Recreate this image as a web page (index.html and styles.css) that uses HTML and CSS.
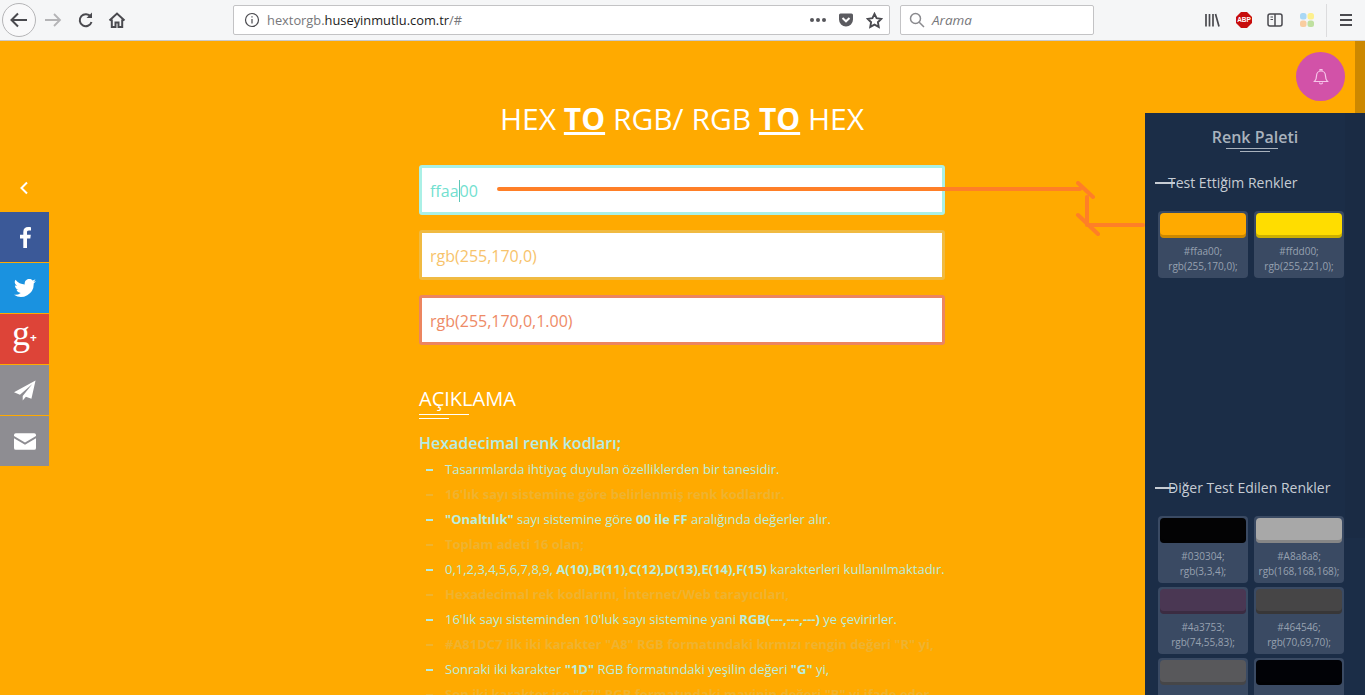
FILE: index.html
```html
<!DOCTYPE html>
<html lang="tr">
<head>
    <meta charset="UTF-8">
    <title>HEX to RGB</title>
    <link rel="stylesheet" href="styles.css">
</head>
<body>
    <header class="browser-bar">
        <div class="nav-btns">
            <span class="back-btn">
                <svg width="22" height="22" viewBox="0 0 22 22" fill="none" stroke="#4a4a4f" stroke-width="2"><path d="M19 11H4M10 4.500L3.500 11L10 17.500"/></svg>
            </span>
            <svg class="nav-icon" width="18" height="18" viewBox="0 0 18 18" fill="none" stroke="#b4b4b6" stroke-width="1.800"><path d="M1 9h15M10 3l6 6-6 6"/></svg>
            <svg class="nav-icon reload" width="18" height="18" viewBox="0 0 18 18" fill="none" stroke="#4a4a4f" stroke-width="2"><path d="M14.500 11a6 6 0 1 1-.8-5.200"/><path d="M15 1.500V7H9.500" fill="#4a4a4f" stroke="none"/></svg>
            <svg class="nav-icon" width="18" height="18" viewBox="0 0 18 18" fill="none" stroke="#4a4a4f" stroke-width="2"><path d="M1.500 9.500L9 2.500l7.500 7M3.800 8.500V16h3.700v-4.500h3V16h3.700V8.500"/></svg>
        </div>
        <div class="url-box">
            <svg width="16" height="16" viewBox="0 0 16 16" fill="none" stroke="#4a4a4f" stroke-width="1.200"><circle cx="8" cy="8" r="6.500"/><path d="M8 7v4.500M8 4.200v1.400"/></svg>
            <span class="url-text">hextorgb.<b>huseyinmutlu.com.tr</b>/#</span>
            <svg width="16" height="4" viewBox="0 0 16 4" fill="#55555a"><circle cx="2" cy="2" r="2"/><circle cx="8" cy="2" r="2"/><circle cx="14" cy="2" r="2"/></svg>
            <svg width="16" height="16" viewBox="0 0 16 16"><path d="M2.500 1.500h11A1.500 1.500 0 0 1 15 3v4.500a7 7 0 0 1-14 0V3a1.500 1.500 0 0 1 1.500-1.500z" fill="#5b5b60"/><path d="M4.500 6L8 9.300 11.500 6" fill="none" stroke="#fff" stroke-width="2"/></svg>
            <svg width="17" height="17" viewBox="0 0 18 18" fill="none" stroke="#4a4a4f" stroke-width="2"><path d="M9 2l2.200 4.600 5 .7-3.600 3.500.9 5L9 13.400l-4.500 2.400.9-5L1.800 7.300l5-.7z"/></svg>
        </div>
        <div class="search-box">
            <svg width="16" height="16" viewBox="0 0 16 16" fill="none" stroke="#8a8a8e" stroke-width="1.500"><circle cx="6.500" cy="6.500" r="5"/><path d="M10.200 10.200L15 15"/></svg>
            <span>Arama</span>
        </div>
        <div class="tool-icons">
            <svg width="16" height="16" viewBox="0 0 16 16" fill="none" stroke="#4a4a4f" stroke-width="1.700"><path d="M2 2v12.500M5.500 2v12.500M9 2v12.500M11.500 2l3.500 12.500"/></svg>
            <svg width="16" height="16" viewBox="0 0 16 16"><path d="M5 0h6l5 5v6l-5 5H5l-5-5V5z" fill="#c70d0d"/><text x="8" y="10.300" class="abp-text">ABP</text></svg>
            <svg width="16" height="16" viewBox="0 0 16 16" fill="none" stroke="#4a4a4f" stroke-width="1.500"><rect x="1" y="2" width="14" height="12" rx="2"/><path d="M8 2v12"/><path d="M3.500 5H6M3.500 7.500H6" stroke-width="1.200"/></svg>
            <svg width="16" height="16" viewBox="0 0 16 16"><rect x="1" y="1" width="6.500" height="6.500" rx="2.500" fill="#a9d8f5"/><rect x="8.500" y="1" width="6.500" height="6.500" rx="2.500" fill="#fdf08e"/><rect x="1" y="8.500" width="6.500" height="6.500" rx="2.500" fill="#f9cda0"/><rect x="8.500" y="8.500" width="6.500" height="6.500" rx="2.500" fill="#bfe0a0"/></svg>
            <span class="tool-sep"></span>
            <svg width="16" height="16" viewBox="0 0 16 16" fill="none" stroke="#4a4a4f" stroke-width="1.800"><path d="M2 3h12M2 8h12M2 13h12"/></svg>
        </div>
    </header>

    <div class="page">
        <main class="content">
            <h1 class="title">HEX <strong>TO</strong> RGB/ RGB <strong>TO</strong> HEX</h1>

            <div class="inputs">
                <div class="color-input hex-input">ffaa<span class="caret"></span>00</div>
                <div class="color-input rgb-input">rgb(255,170,0)</div>
                <div class="color-input rgba-input">rgb(255,170,0,1.00)</div>
            </div>

            <h2 class="desc-title">AÇIKLAMA</h2>
            <h3 class="desc-sub">Hexadecimal renk kodları;</h3>
            <ul class="desc-list">
                <li>Tasarımlarda ihtiyaç duyulan özelliklerden bir tanesidir.</li>
                <li class="faded">16'lık sayı sistemine göre belirlenmiş renk kodlardır.</li>
                <li><b>"Onaltılık"</b> sayı sistemine göre <b>00 ile FF</b> aralığında değerler alır.</li>
                <li class="faded">Toplam adeti 16 olan;</li>
                <li>0,1,2,3,4,5,6,7,8,9, <b>A(10),B(11),C(12),D(13),E(14),F(15)</b> karakterleri kullanılmaktadır.</li>
                <li class="faded">Hexadecimal rek kodlarını, İnternet/Web tarayıcıları,</li>
                <li>16'lık sayı sisteminden 10'luk sayı sistemine yani <b>RGB(---,---,---)</b> ye çevirirler.</li>
                <li class="faded">#A81DC7 ilk iki karakter "A8" RGB formatındaki kırmızı rengin değeri "R" yi,</li>
                <li>Sonraki iki karakter <b>"1D"</b> RGB formatındaki yeşilin değeri <b>"G"</b> yi,</li>
                <li class="faded">Son iki karakter ise "C7" RGB formatındaki mavinin değeri "B" yi ifade eder.</li>
            </ul>
        </main>

        <span class="side-toggle">
            <svg width="10" height="14" viewBox="0 0 10 14" fill="none" stroke="#fff" stroke-width="2"><path d="M8 1.500L2.500 7 8 12.500"/></svg>
        </span>
        <nav class="social">
            <a class="fb"><svg width="14" height="22" viewBox="0 0 14 22" fill="#fff"><path d="M9 22V12.500h3.300l.5-3.800H9V6.400c0-1.100.3-1.800 1.900-1.800H13V1.200C12.600 1.100 11.400 1 10.100 1 7.300 1 5.300 2.700 5.300 5.900v2.800H2v3.800h3.300V22z"/></svg></a>
            <a class="tw"><svg width="22" height="18" viewBox="0 0 22 18" fill="#fff"><path d="M22 2.100c-.8.400-1.700.6-2.600.7.900-.6 1.600-1.400 2-2.500-.9.500-1.800.9-2.900 1.100A4.500 4.500 0 0 0 10.800 5.500 12.800 12.800 0 0 1 1.500.8a4.500 4.500 0 0 0 1.400 6c-.7 0-1.400-.2-2-.6 0 2.200 1.500 4 3.600 4.500-.7.200-1.400.2-2 .1.600 1.800 2.200 3.100 4.200 3.100A9 9 0 0 1 0 15.800 12.800 12.800 0 0 0 19.700 4.500c.9-.6 1.700-1.400 2.300-2.400z"/></svg></a>
            <a class="gp"><span class="gp-g">g</span><span class="gp-plus">+</span></a>
            <a class="tg"><svg width="22" height="21" viewBox="0 0 24 22" fill="#fff"><path d="M23.500 0L0 13l6.500 2.500L20 4 9.500 17v5l3.500-4.300 6 2.300z"/></svg></a>
            <a class="ml"><svg width="22" height="17" viewBox="0 0 24 18" fill="#fff"><path d="M2 0h20a2 2 0 0 1 2 2v1L12 10 0 3V2a2 2 0 0 1 2-2z"/><path d="M0 5.500l12 7 12-7V16a2 2 0 0 1-2 2H2a2 2 0 0 1-2-2z"/></svg></a>
        </nav>

        <svg class="arrows" width="660" height="60" viewBox="0 0 660 60" fill="none" stroke="#ff7f27" stroke-width="4" stroke-linecap="round">
            <path d="M4 8H585M583 2L598 16M592 16V44M592 44H648M583 34L603 53"/>
        </svg>

        <button class="bell">
            <svg width="16" height="17" viewBox="0 0 16 17" fill="none" stroke="#f6c6ea" stroke-width="1.200"><path d="M1.500 13.500c1.500-1.500 2-2.500 2-5.500 0-3 2-5 4.500-5s4.500 2 4.500 5c0 3 .5 4 2 5.500z"/><path d="M7 3V1.500h2V3M6.500 14.500a1.500 1.500 0 0 0 3 0"/></svg>
        </button>

        <span class="edge-strip"></span>

        <aside class="palette">
            <span class="palette-scroll"></span>
            <h2 class="palette-title">Renk Paleti</h2>
            <section class="palette-group mine">
                <h4 class="group-title">Test Ettiğim Renkler</h4>
                <div class="swatches">
                    <div class="swatch">
                        <div class="chip chip-ffaa00"></div>
                        <p>#ffaa00;<br>rgb(255,170,0);</p>
                    </div>
                    <div class="swatch">
                        <div class="chip chip-ffdd00"></div>
                        <p>#ffdd00;<br>rgb(255,221,0);</p>
                    </div>
                </div>
            </section>
            <section class="palette-group">
                <h4 class="group-title">Diğer Test Edilen Renkler</h4>
                <div class="swatches">
                    <div class="swatch">
                        <div class="chip chip-030304"></div>
                        <p>#030304;<br>rgb(3,3,4);</p>
                    </div>
                    <div class="swatch">
                        <div class="chip chip-a8a8a8"></div>
                        <p>#A8a8a8;<br>rgb(168,168,168);</p>
                    </div>
                    <div class="swatch">
                        <div class="chip chip-4a3753"></div>
                        <p>#4a3753;<br>rgb(74,55,83);</p>
                    </div>
                    <div class="swatch">
                        <div class="chip chip-464546"></div>
                        <p>#464546;<br>rgb(70,69,70);</p>
                    </div>
                    <div class="swatch">
                        <div class="chip chip-58585b"></div>
                    </div>
                    <div class="swatch">
                        <div class="chip chip-010206"></div>
                    </div>
                </div>
            </section>
        </aside>
    </div>
</body>
</html>
```

FILE: styles.css
```css
html, body {
    margin: 0;
    height: 695px;
    overflow: hidden;
}

body {
    font-family: 'Open Sans', sans-serif;
    background: #ffaa00;
    color: #fff;
}

/* browser chrome */
.browser-bar {
    height: 40px;
    display: flex;
    align-items: center;
    background: #f5f6f7;
    border-bottom: 1px solid #c9c9cb;
    font-family: 'Open Sans', sans-serif;
}

.nav-btns {
    display: flex;
    align-items: center;
    width: 233px;
    padding-left: 2px;
    box-sizing: border-box;
}

.back-btn {
    width: 32px;
    height: 32px;
    border: 1px solid #b5b5b7;
    border-radius: 50%;
    background: #f9f9fa;
    display: flex;
    align-items: center;
    justify-content: center;
}

.nav-icon {
    margin-left: 8px;
}

.nav-icon.reload {
    margin-left: 15px;
}

.nav-icon:last-child {
    margin-left: 13px;
}

.url-box, .search-box {
    display: flex;
    align-items: center;
    background: #fff;
    border: 1px solid #c3c3c5;
    border-radius: 2px;
    box-sizing: border-box;
    height: 30px;
}

.url-box {
    width: 657px;
    padding: 0 6px 0 10px;
    gap: 12px;
}

.url-text {
    flex: 1;
    margin-left: -5px;
    font-size: 12.85px;
    color: #77777b;
}

.url-text b {
    font-weight: 400;
    color: #1c1c22;
}

.search-box {
    width: 194px;
    margin-left: 10px;
    padding-left: 8px;
    gap: 7px;
    font-size: 13.5px;
    font-style: italic;
    color: #77777b;
}

.tool-icons {
    display: flex;
    align-items: center;
    gap: 15.5px;
    margin-left: 110px;
}

.abp-text {
    font-family: 'Liberation Sans', sans-serif;
    font-size: 6.5px;
    font-weight: 700;
    fill: #fff;
    text-anchor: middle;
}

.tool-sep {
    width: 1px;
    height: 33px;
    background: #dcdcde;
    margin: 0 -4.5px 0 -4px;
}

/* page */
.page {
    position: relative;
    height: 654px;
    overflow: hidden;
}

.content {
    width: 526px;
    margin-left: 419px;
    padding-top: 58px;
}

.title {
    margin: 0 0 26px 0;
    font-size: 30px;
    line-height: 40px;
    font-weight: 400;
    text-align: center;
}

.title strong {
    font-weight: 700;
    text-decoration: underline;
}

.inputs {
    display: flex;
    flex-direction: column;
    gap: 15px;
}

.color-input {
    height: 50px;
    box-sizing: border-box;
    padding-left: 8px;
    line-height: 46px;
    font-size: 16px;
    background: #fff;
    border: 3px solid;
    border-radius: 3px;
}

.hex-input {
    border-color: #aaf0e6;
    color: #72dfd0;
}

.rgb-input {
    border-color: #f0ba41;
    color: #f7c36b;
}

.rgba-input {
    border-color: #ec8560;
    color: #ee8a66;
}

.caret {
    display: inline-block;
    width: 1px;
    height: 22px;
    background: #5fc7b8;
    vertical-align: -5px;
}

.desc-title {
    position: relative;
    margin: 39px 0 0 0;
    font-size: 20px;
    line-height: 30px;
    font-weight: 400;
}

.desc-title::before, .desc-title::after {
    content: '';
    position: absolute;
    left: 0;
    height: 1px;
    background: #fff;
}

.desc-title::before {
    bottom: -1px;
    width: 50px;
}

.desc-title::after {
    bottom: -5px;
    width: 30px;
}

.desc-sub {
    margin: 17px 0 0 0;
    font-size: 16px;
    line-height: 24px;
    font-weight: 600;
    color: #b4ece4;
}

.desc-list {
    list-style: none;
    margin: 2px 0 0 0;
    padding: 0;
    font-size: 13px;
    color: #b9eedd;
}

.desc-list li {
    position: relative;
    padding-left: 26px;
    line-height: 25px;
    white-space: nowrap;
}

.desc-list li::before {
    content: '';
    position: absolute;
    left: 7px;
    top: 12px;
    width: 7px;
    height: 2px;
    background: #b4ece4;
}

.desc-list b {
    font-weight: 700;
}

.desc-list .faded {
    font-weight: 700;
    color: #efb32f;
}

.desc-list .faded::before {
    background: #efb32f;
}

/* left share bar */
.side-toggle {
    position: absolute;
    left: 19px;
    top: 140px;
    line-height: 0;
}

.social {
    position: absolute;
    left: 0;
    top: 171px;
    width: 49px;
    display: flex;
    flex-direction: column;
    gap: 1px;
}

.social a {
    height: 50px;
    display: flex;
    align-items: center;
    justify-content: center;
}

.fb { background: #3b5998; }
.tw { background: #1a92e0; }
.gp { background: #dd4438; }
.tg, .ml { background: #8e8d92; }

.gp-g {
    font-family: 'Liberation Serif', serif;
    font-size: 36px;
    line-height: 36px;
    margin-top: -12px;
}

.gp-plus {
    font-size: 12px;
    font-weight: 700;
    margin-top: -3px;
}

.arrows {
    position: absolute;
    left: 495px;
    top: 140px;
}

.bell {
    position: absolute;
    right: 20px;
    top: 11px;
    width: 49px;
    height: 49px;
    padding: 0;
    border: none;
    border-radius: 50%;
    background: #d252a8;
    display: flex;
    align-items: center;
    justify-content: center;
}

.edge-strip {
    position: absolute;
    right: 0;
    top: 0;
    width: 10px;
    height: 72px;
    background: #cc8800;
}

/* right palette panel */
.palette {
    position: absolute;
    right: 0;
    top: 72px;
    width: 220px;
    height: 582px;
    box-sizing: border-box;
    padding: 12px 13px 0 13px;
    background: #1b2d47;
}

.palette-scroll {
    position: absolute;
    right: 0;
    top: 0;
    width: 20px;
    height: 425px;
    background: #1a2b44;
}

.palette-title {
    position: relative;
    margin: 0;
    font-size: 16px;
    line-height: 24px;
    font-weight: 600;
    text-align: center;
    color: #a9b2bd;
}

.palette-title::before, .palette-title::after {
    content: '';
    position: absolute;
    height: 1px;
    background: #a9b2bd;
    left: 50%;
}

.palette-title::before {
    bottom: 0;
    width: 52px;
    margin-left: -29px;
}

.palette-title::after {
    bottom: -3px;
    width: 30px;
    margin-left: -15px;
}

.palette-group {
    position: relative;
}

.palette-group.mine {
    height: 305px;
    margin-top: 22px;
}

.group-title {
    position: relative;
    margin: 0;
    padding-left: 10px;
    font-size: 14px;
    line-height: 24px;
    font-weight: 400;
    color: #c6ccd4;
    white-space: nowrap;
}

.group-title::before {
    content: '';
    position: absolute;
    left: -3px;
    top: 11px;
    width: 20px;
    height: 2px;
    background: #c6ccd4;
}

.swatches {
    margin-top: 16px;
    display: grid;
    grid-template-columns: 90px 90px;
    column-gap: 6px;
    row-gap: 4px;
}

.swatch {
    height: 67px;
    box-sizing: border-box;
    padding: 2px;
    background: #3a4a63;
    border-radius: 4px;
    position: relative;
}

.chip {
    height: 25px;
    border-radius: 4px;
    box-shadow: inset 0 -3px 0 rgba(0, 0, 0, 0.2);
}

.swatch p {
    margin: 6px 0 0 0;
    font-size: 10px;
    line-height: 15px;
    text-align: center;
    color: #97a1b0;
    white-space: nowrap;
}

.chip-ffaa00 { background: #ffaa00; }
.chip-ffdd00 { background: #ffdd00; }
.chip-030304 { background: #030304; }
.chip-a8a8a8 { background: #a8a8a8; }
.chip-4a3753 { background: #4a3753; }
.chip-464546 { background: #464546; }
.chip-58585b { background: #58585b; }
.chip-010206 { background: #010206; }
```
